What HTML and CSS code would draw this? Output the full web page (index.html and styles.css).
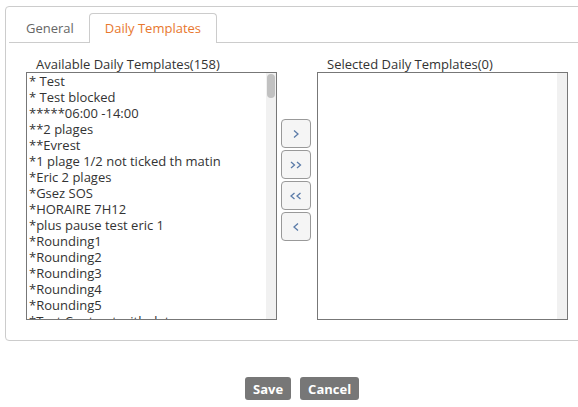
FILE: index.html
```html
<!DOCTYPE html>
<html lang="en">
<head>
  <meta charset="UTF-8" />
  <title>Daily Templates</title>
  <link rel="stylesheet" href="styles.css">
</head>
<body>
  <div class="panel">
    <ul class="tabs">
      <li class="tab">General</li>
      <li class="tab active">Daily Templates</li>
    </ul>

    <div class="picker">
      <div class="column">
        <div class="caption">Available Daily Templates(158)</div>
        <div class="listbox">
          <div class="items">
            <div class="item">* Test</div>
            <div class="item">* Test blocked</div>
            <div class="item">*****06:00 -14:00</div>
            <div class="item">**2 plages</div>
            <div class="item">**Evrest</div>
            <div class="item">*1 plage 1/2 not ticked th matin</div>
            <div class="item">*Eric 2 plages</div>
            <div class="item">*Gsez SOS</div>
            <div class="item">*HORAIRE 7H12</div>
            <div class="item">*plus pause test eric 1</div>
            <div class="item">*Rounding1</div>
            <div class="item">*Rounding2</div>
            <div class="item">*Rounding3</div>
            <div class="item">*Rounding4</div>
            <div class="item">*Rounding5</div>
            <div class="item">*Test Contract with dates</div>
          </div>
          <div class="scrollbar"><div class="thumb"></div></div>
        </div>
      </div>

      <div class="moves">
        <button class="move">
          <svg width="10" height="10" viewBox="0 0 10 10"><polyline points="3,1.5 7,5 3,8.5" /></svg>
        </button>
        <button class="move">
          <svg width="14" height="10" viewBox="0 0 14 10"><polyline points="2,2 5.5,5 2,8" /><polyline points="8,2 11.5,5 8,8" /></svg>
        </button>
        <button class="move">
          <svg width="14" height="10" viewBox="0 0 14 10"><polyline points="5.5,2 2,5 5.5,8" /><polyline points="11.5,2 8,5 11.5,8" /></svg>
        </button>
        <button class="move">
          <svg width="10" height="10" viewBox="0 0 10 10"><polyline points="7,1.5 3,5 7,8.5" /></svg>
        </button>
      </div>

      <div class="column">
        <div class="caption">Selected Daily Templates(0)</div>
        <div class="listbox">
          <div class="items"></div>
          <div class="scrollbar"></div>
        </div>
      </div>
    </div>
  </div>

  <div class="actions">
    <button class="action">Save</button>
    <button class="action">Cancel</button>
  </div>
</body>
</html>
```

FILE: styles.css
```css
body {
  font-family: 'Open Sans', 'DejaVu Sans', sans-serif;
  font-size: 13px;
  color: #333;
  margin: 0;
  padding: 0;
  overflow: hidden;
  background: white;
}
.panel {
  width: 600px;
  height: 327px;
  margin: 6px 0 0 5px;
  padding: 6px 0 0 3px;
  border: 1px solid #ccc;
  border-radius: 4px;
}
.tabs {
  list-style: none;
  margin: 0;
  padding: 0 0 0 2px;
  display: flex;
  border-bottom: 1px solid #ccc;
  height: 29px;
}
.tab {
  padding: 0 14px;
  line-height: 28px;
  color: #666;
  border: 1px solid transparent;
  border-bottom: none;
  border-radius: 4px 4px 0 0;
  margin-bottom: -1px;
}
.tab.active {
  color: #e8772e;
  background: white;
  border-color: #ccc;
  height: 29px;
  padding: 0 15px;
}
.picker {
  display: flex;
  padding: 13px 0 0 17px;
  gap: 4px;
}
.column {
  width: 251px;
}
.caption {
  padding-left: 10px;
  line-height: 16px;
  height: 16px;
}
.listbox {
  display: flex;
  height: 246px;
  border: 1px solid #777;
  overflow: hidden;
}
.items {
  flex: 1;
  padding-left: 2px;
  overflow: hidden;
}
.item {
  line-height: 16px;
  white-space: nowrap;
}
.scrollbar {
  width: 10px;
  background: #f1f1f1;
  padding-top: 1px;
}
.thumb {
  height: 24px;
  margin: 0 1px;
  background: #c1c1c1;
  border-radius: 4px;
}
.moves {
  display: flex;
  flex-direction: column;
  gap: 2px;
  padding-top: 63px;
  width: 32px;
}
.move {
  display: flex;
  align-items: center;
  justify-content: center;
  width: 30px;
  height: 29px;
  border: 1px solid #999;
  border-radius: 4px;
  background: #f5f5f5;
  padding: 0;
}
.move polyline {
  fill: none;
  stroke: #5b7ba8;
  stroke-width: 1.3;
}
.actions {
  display: flex;
  gap: 9px;
  padding: 36px 0 0 245px;
}
.action {
  height: 23px;
  padding: 0 8px;
  border: none;
  border-radius: 3px;
  background: #777;
  color: white;
  font-family: inherit;
  font-weight: bold;
  font-size: 13px;
}
```
